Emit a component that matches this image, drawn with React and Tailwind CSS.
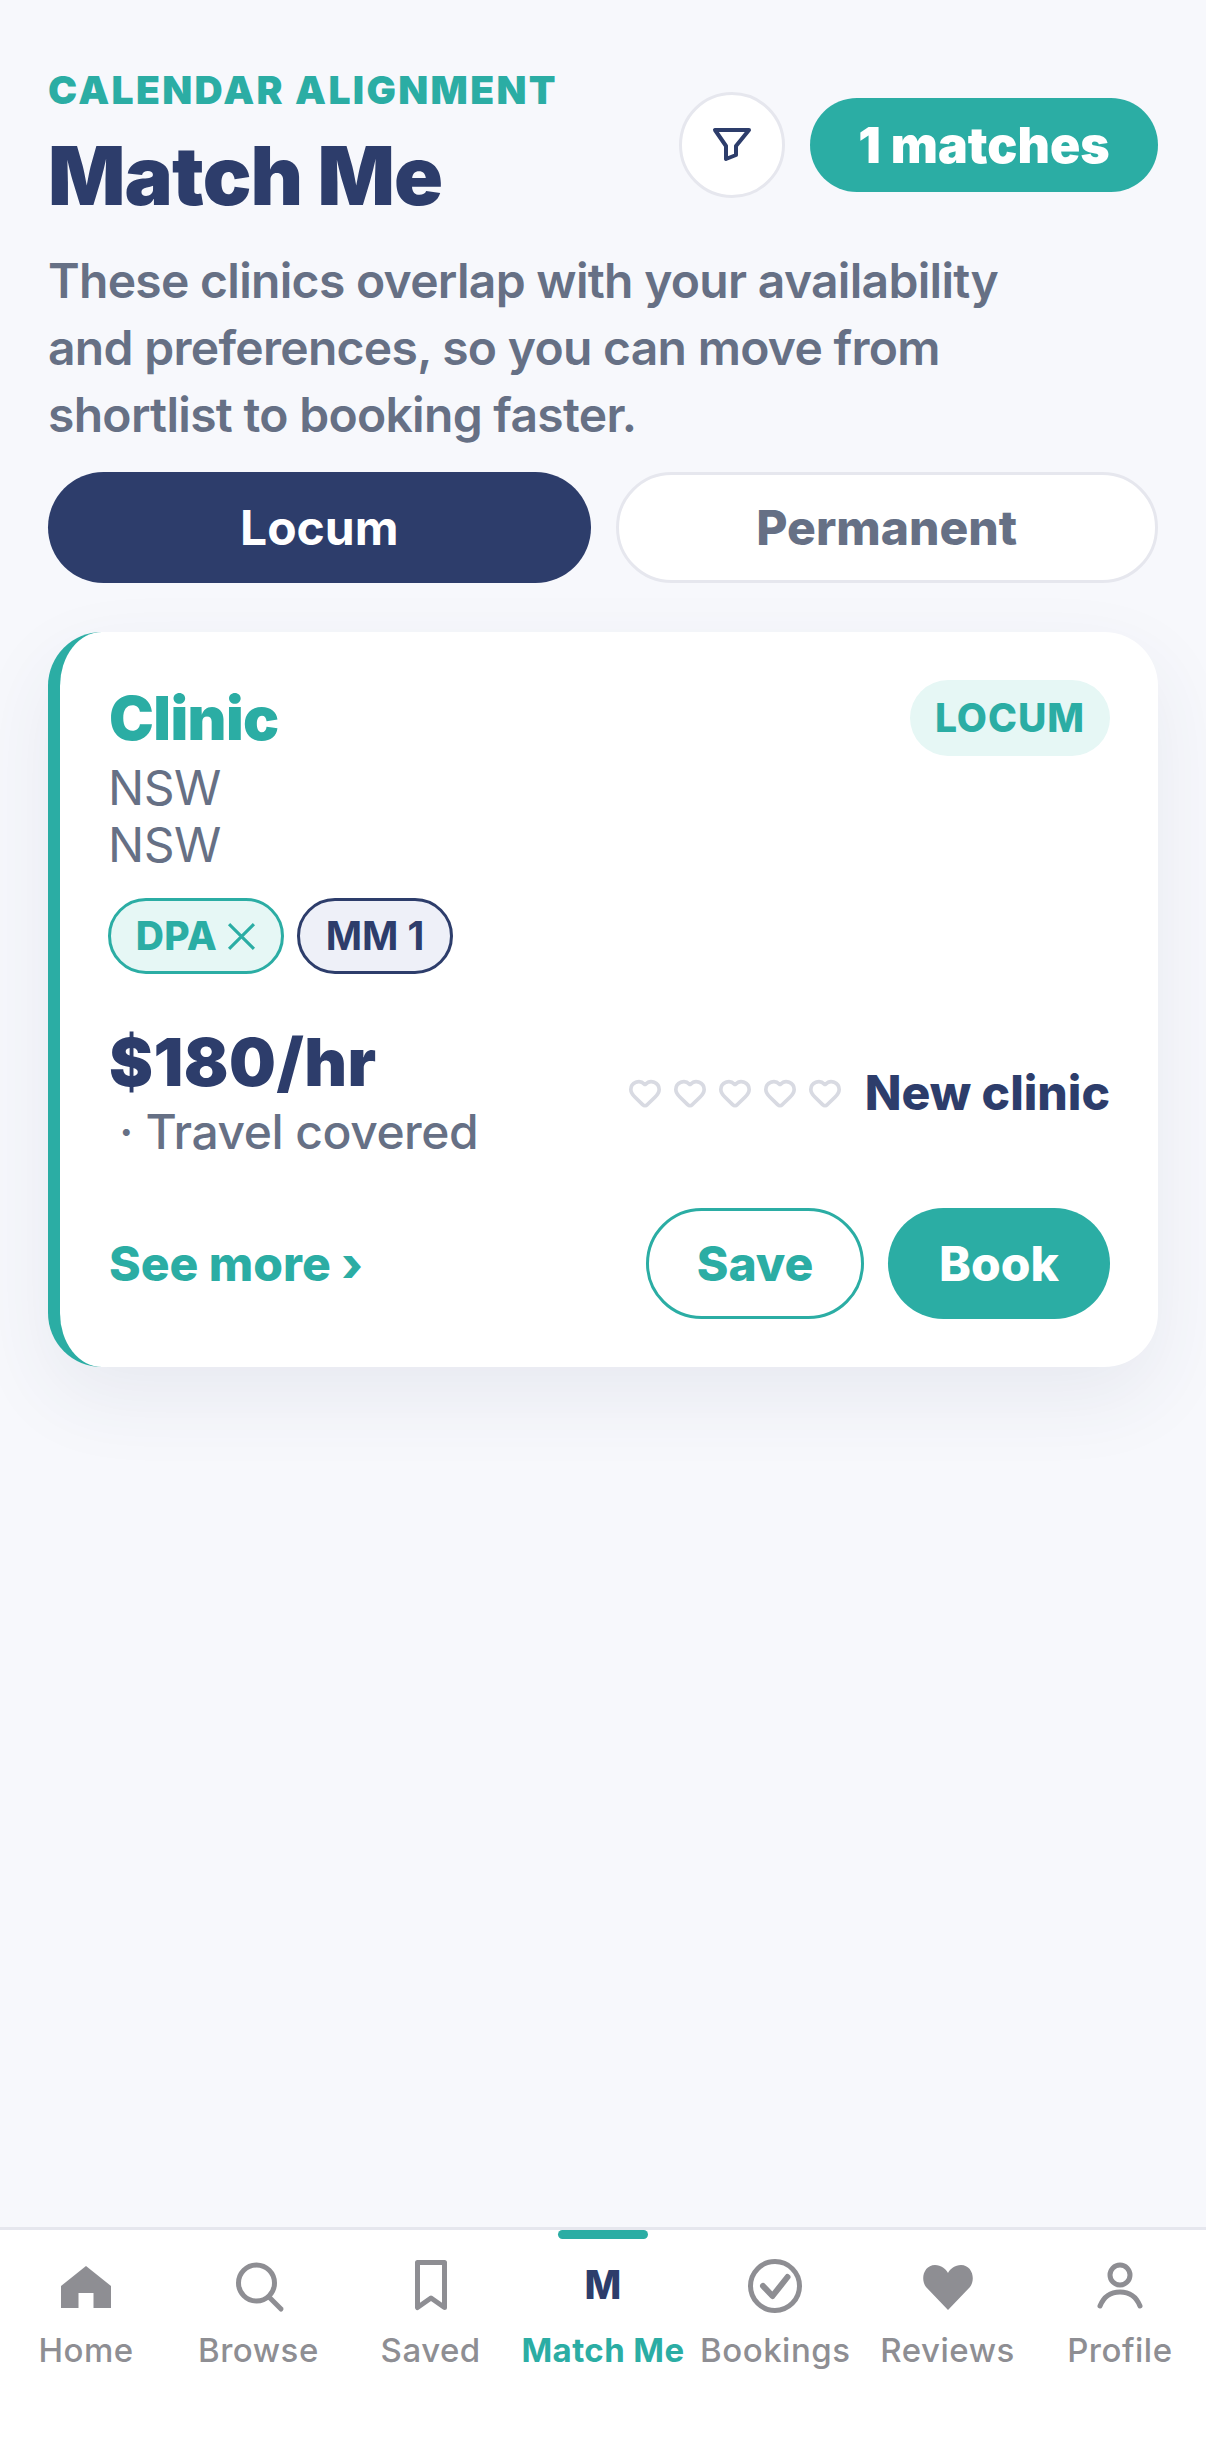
import React from "react";
import { Heart } from "lucide-react";

const Icon = ({ children }) => (
    <svg width="60" height="60" viewBox="0 0 60 60" fill="none" stroke="#8E8E93" strokeWidth="5" strokeLinecap="round" strokeLinejoin="round">
        {children}
    </svg>
);

const tabs = [
    { label: "Home", icon: <path d="M30 11 L55 31 V53 H37.5 V38 H22.5 V53 H5 V31 Z" fill="#8E8E93" stroke="none" /> },
    { label: "Browse", icon: <><circle cx="28.5" cy="28" r="18" /><path d="M41 42 L53 54" /></> },
    { label: "Saved", icon: <path d="M16.5 7.5 H43.5 V52.5 L30 43 L16.5 52.5 Z" /> },
    { label: "Match Me", active: true },
    { label: "Bookings", icon: <><circle cx="30" cy="31" r="24.5" /><path d="M18 31 L27.5 41 L42.5 22" strokeWidth="6" /></> },
    { label: "Reviews", icon: <path d="M30 55 L8 32 C2 24 6 10 17 10 C23 10 28 14 30 18 C32 14 37 10 43 10 C54 10 58 24 52 32 Z" fill="#8E8E93" stroke="none" /> },
    { label: "Profile", icon: <><circle cx="30" cy="20" r="10" /><path d="M10 51 C14 41 22 37 30 37 C38 37 46 41 50 51" /></> },
];

export default function App() {
    return (
        <div className="h-[2455px] w-[1206px] flex flex-col bg-[#F7F8FC] font-['Inter',sans-serif] overflow-hidden">
            <main className="flex-1 px-[48px] pt-[66px]">
                <div className="flex justify-between">
                    <div>
                        <p className="text-[39px] leading-[48px] font-black tracking-[2.35px] text-[#2BADA4]">CALENDAR ALIGNMENT</p>
                        <h1 className="mt-[15px] text-[81px] leading-[94px] font-black tracking-[-0.9px] text-[#2D3D6B]">Match Me</h1>
                    </div>
                    <div className="flex items-center gap-[25px] h-[106px] mt-[26px]">
                        <button className="w-[106px] h-[106px] rounded-full bg-white border-[3px] border-[#E6E7EE] flex items-center justify-center">
                            <svg width="40" height="36" viewBox="0 0 40 36" fill="none" stroke="#2D3D6B" strokeWidth="4" strokeLinejoin="round">
                                <path d="M3 3 H37 L24 19 V28 L14 32 V19 Z" />
                            </svg>
                        </button>
                        <div className="w-[348px] h-[94px] rounded-[47px] bg-[#2BADA4] text-white text-[50px] font-black flex items-center justify-center">1 matches</div>
                    </div>
                </div>
                <p className="mt-[24px] w-[1000px] text-[48px] leading-[67px] font-semibold tracking-[-0.7px] text-[#667085]">
                    These clinics overlap with your availability and preferences, so you can move from shortlist to booking faster.
                </p>
                <div className="mt-[24px] grid grid-cols-2 gap-[25px]">
                    <button className="h-[111px] rounded-full bg-[#2D3D6B] text-white text-[48px] font-bold">Locum</button>
                    <button className="h-[111px] rounded-full bg-white border-[3px] border-[#E6E7EE] text-[#667085] text-[48px] font-extrabold">Permanent</button>
                </div>

                <section className="mt-[49px] h-[735px] rounded-[54px] bg-white border-l-[12px] border-[#2BADA4] pl-[48px] pr-[48px] pt-[48px] shadow-[0_30px_80px_rgba(45,61,107,0.08)]">
                    <div className="flex justify-between items-start">
                        <div>
                            <h2 className="mt-[2px] ml-[1px] text-[60px] leading-[72px] font-black tracking-[-0.6px] text-[#2BADA4]">Clinic</h2>
                            <p className="mt-[5px] text-[48px] leading-[57px] tracking-[-0.5px] text-[#667085]">NSW</p>
                            <p className="text-[48px] leading-[57px] tracking-[-0.5px] text-[#667085]">NSW</p>
                        </div>
                        <span className="w-[200px] h-[76px] rounded-full bg-[#E6F7F5] text-[#2BADA4] text-[39px] font-extrabold flex items-center justify-center tracking-[1px]">LOCUM</span>
                    </div>
                    <div className="mt-[25px] flex gap-[13px]">
                        <span className="w-[176px] h-[76px] rounded-full bg-[#E6F7F5] border-[3px] border-[#2BADA4] text-[#2BADA4] text-[39px] font-extrabold tracking-[0.4px] flex items-center justify-center gap-[10px]">
                            DPA
                            <svg width="29" height="29" viewBox="0 0 28 28" stroke="#2BADA4" strokeWidth="3"><path d="M2 2 L26 26 M26 2 L2 26" /></svg>
                        </span>
                        <span className="w-[156px] h-[76px] rounded-full bg-[#EEF0F8] border-[3px] border-[#2D3D6B] text-[#2D3D6B] text-[39px] font-bold flex items-center justify-center">MM 1</span>
                    </div>
                    <div className="mt-[47px] flex justify-between items-center">
                        <div className="pl-[1px]">
                            <p className="text-[66px] leading-[83px] font-black tracking-[0.5px] text-[#2D3D6B]">$180/hr</p>
                            <p className="-mt-[1px] text-[48px] leading-[57px] font-medium tracking-[-0.47px] text-[#667085] pl-[10px]">· Travel covered</p>
                        </div>
                        <div className="mt-[4px] flex items-center gap-[23px]">
                            <div className="flex gap-[11px]">
                                {[0, 1, 2, 3, 4].map((i) => (
                                    <Heart key={i} size={34} color="#D8DAE2" strokeWidth={2.6} />
                                ))}
                            </div>
                            <span className="text-[48px] font-extrabold text-[#2D3D6B]">New clinic</span>
                        </div>
                    </div>
                    <div className="mt-[48px] flex justify-between items-center">
                        <span className="pl-[1px] text-[48px] font-extrabold text-[#2BADA4]">See more ›</span>
                        <div className="flex gap-[24px]">
                            <button className="w-[218px] h-[111px] rounded-full border-[3px] border-[#2BADA4] text-[#2BADA4] text-[48px] font-extrabold">Save</button>
                            <button className="w-[222px] h-[111px] rounded-full bg-[#2BADA4] text-white text-[48px] font-extrabold">Book</button>
                        </div>
                    </div>
                </section>
            </main>

            <nav className="relative h-[228px] bg-white border-t-[3px] border-[#E6E7EE] grid grid-cols-7 pt-[25px]">
                <div className="absolute top-0 left-[558px] w-[90px] h-[9px] rounded-full bg-[#2BADA4]" />
                {tabs.map((tab) => (
                    <div key={tab.label} className="flex flex-col items-center">
                        <div className="w-[60px] h-[60px] flex items-center justify-center">
                            {tab.active ? <span className="text-[39px] font-extrabold text-[#2D3D6B]">M</span> : <Icon>{tab.icon}</Icon>}
                        </div>
                        <span className={`mt-[15px] text-[33px] leading-[40px] whitespace-nowrap ${tab.active ? "font-bold tracking-[0.4px] text-[#2BADA4]" : "font-medium tracking-[0.5px] text-[#8E8E93]"}`}>{tab.label}</span>
                    </div>
                ))}
            </nav>
        </div>
    );
}
